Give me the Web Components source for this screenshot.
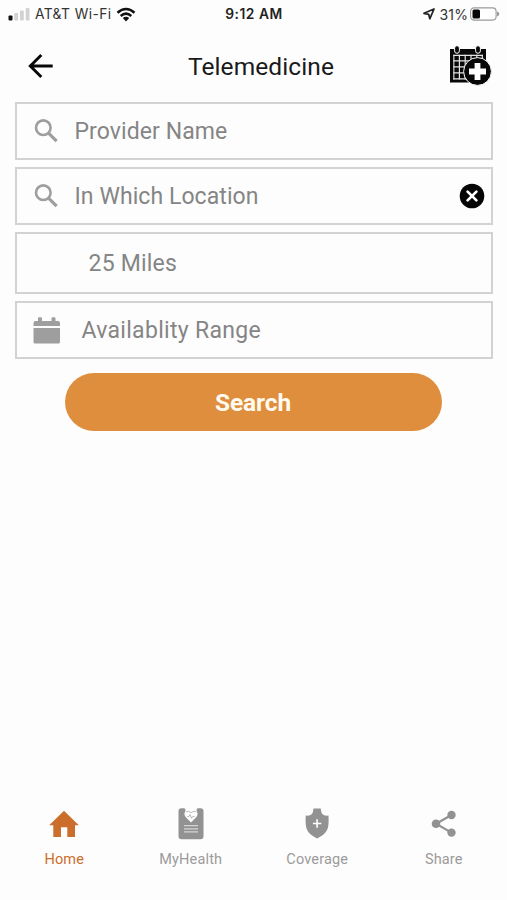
<!DOCTYPE html>
<html lang="en">
<head>
<meta charset="utf-8">
<title>Telemedicine</title>
<style>
  body {
    margin: 0;
    background: #fdfdfd;
    font-family: Roboto, "Liberation Sans", sans-serif;
  }
</style>
</head>
<body>
<telemed-app></telemed-app>
<script>
const icons = {
  back: `<svg width="26" height="26" viewBox="0 0 26 26" fill="none" stroke="#080808" stroke-width="2.9"><path d="M24.7 13H2.5M13.3 2L2.3 13L13.3 24"/></svg>`,
  schedule: `<svg width="44" height="42" viewBox="0 0 44 42">
    <path fill="#080808" d="M1 4h36v33.500H1z"/>
    <g fill="#e4e4e4">
      <path d="M4.3 9.8h29.6v1.1H4.3zM4.3 15.200h29.6v1.200H4.3zM4.3 21.200h29.6v1.200H4.3zM4.3 27.200h29.6v1.200H4.3zM4.3 33.300h29.6v1.100H4.3z"/>
      <path d="M4.3 9.8h1.100v24.600H4.3zM9.8 9.8h1.200v24.600H9.8zM15.6 9.8h1.200v24.600h-1.200zM21.4 9.8h1.200v24.600h-1.200zM27.2 9.8h1.200v24.600h-1.200zM32.7 9.8h1.200v24.600h-1.200z"/>
    </g>
    <g fill="#080808" stroke="#fdfdfd" stroke-width="1">
      <rect x="5.6" y=".7" width="4.8" height="7.6" rx="2.4"/>
      <rect x="26.6" y=".7" width="4.8" height="7.6" rx="2.4"/>
      <circle cx="28.5" cy="26.5" r="13.9"/>
    </g>
    <path fill="#fdfdfd" d="M25.6 18h5.8v5.600H37v5.800h-5.600V35h-5.800v-5.600H20v-5.800h5.600z"/>
  </svg>`,
  search: `<svg width="24" height="24" viewBox="0 0 24 24" fill="none" stroke="#9e9e9e"><circle cx="9.3" cy="8.7" r="7.3" stroke-width="2.6"/><path stroke-width="3.2" d="M14.3 13.9L22.6 22.2"/></svg>`,
  calendar: `<svg width="28" height="27" viewBox="0 0 28 27" fill="#9e9e9e"><path d="M.5 9V6q0-2 2-2H5V1.500Q5 .3 6.200.3h1.600Q9 .3 9 1.500V4h9.500V1.500q0-1.200 1.200-1.200h1.600q1.200 0 1.200 1.200V4H25q2 0 2 2v3zM.5 11H27v14q0 1.500-1.500 1.500H2Q.5 26.500.5 25z"/></svg>`,
  clear: `<svg width="26" height="26" viewBox="0 0 26 26"><circle cx="13" cy="13" r="12.3" fill="#050505"/><path stroke="#fff" stroke-width="2.7" stroke-linecap="round" d="M8.6 8.6l8.8 8.8M17.4 8.6l-8.8 8.8"/></svg>`,
  home: `<svg width="30" height="32" viewBox="0 0 30 32" fill="#cb6e2b"><path d="M15 2.7L29.8 17.3H26V29H18.3V19.2H12V29H4.3V17.3H.2z"/></svg>`,
  health: `<svg width="30" height="32" viewBox="0 0 30 32"><path fill="#929292" d="M5.5.3H8q1.500 0 1.500 2L9 4q-1.500 2.500.8 5.200l5.200 5.300 5.200-5.300Q22.500 6.500 21 4l-.5-1.700q0-2 1.500-2h2.500q3 0 3 3v24.900q0 3-3 3h-19q-3 0-3-3V3.300q0-3 3-3z"/>
    <path fill="none" stroke="#a8a8a8" stroke-width=".8" d="M10 3.7q2.500-1.200 5 1 2.500-2.200 5-1M11.500 8.500h1.500l1-2 1.500 3.800 1.200-1.800h1.800"/>
    <path stroke="#d5d5d5" stroke-width="1.3" d="M8 17.7h14M8 20.8h14M8 23.8h14"/></svg>`,
  coverage: `<svg width="30" height="32" viewBox="0 0 30 32"><path fill="#929292" d="M11.5.6h7.2l.8 4.200q1.800 3.400 7 2.800.5 9.500-1 13.500-2.200 5.800-10.400 9.400Q6.900 26.900 4.700 21.100q-1.500-4-1-13.500 5.200.6 7-2.800z"/><path stroke="#fff" stroke-width="1.6" d="M15.1 11.3v8.4M10.9 15.5h8.4"/></svg>`,
  share: `<svg width="30" height="32" viewBox="0 0 30 32" fill="#929292"><path fill="none" stroke="#929292" stroke-width="2.2" d="M22.5 7L7 15.8L22.5 24.6"/><circle cx="7" cy="15.8" r="4.3"/><circle cx="22.5" cy="7" r="4.2"/><circle cx="22.5" cy="24.6" r="4.2"/></svg>`,
};

class StatusBar extends HTMLElement {
  constructor() {
    super();
    this.attachShadow({ mode: 'open' });
  }

  connectedCallback() {
    this.shadowRoot.innerHTML = `
      <style>
        :host {
          display: grid;
          grid-template-columns: 1fr auto 1fr;
          align-items: center;
          height: 27px;
          padding: 0 7px 0 8px;
          box-sizing: border-box;
          font: 13.8px/27px Inter, sans-serif;
          color: #333;
        }
        div { display: flex; align-items: center; }
        .carrier { margin: 0 5px; padding-top: 1px; letter-spacing: .4px; }
        .time { padding-top: 1px; font-weight: 600; letter-spacing: .5px; color: #222; }
        .right { justify-content: flex-end; }
        .percent { margin: 0 2px 0 5px; font-size: 14px; letter-spacing: .1px; }
        svg { display: block; }
      </style>
      <div>
        <svg width="22" height="14" viewBox="0 0 22 14"><rect x=".5" y="8.5" width="4" height="5" rx="1" fill="#111"/><g fill="#d2d2d2"><rect x="6.3" y="6" width="3.8" height="7.5" rx="1"/><rect x="12" y="3.5" width="3.8" height="10" rx="1"/><rect x="17.7" y="1" width="3.8" height="12.5" rx="1"/></g></svg>
        <span class="carrier">AT&amp;T Wi-Fi</span>
        <svg width="20" height="15" viewBox="0 0 20 15" fill="none" stroke="#111" stroke-width="2.5"><path d="M1.5 5.7Q10-1.8 18.5 5.7"/><path d="M4.7 9Q10 4.3 15.3 9"/><path fill="#111" stroke="none" d="M6.8 11q3.2-2.7 6.4 0L10 14.5z"/></svg>
      </div>
      <div class="time">9:12 AM</div>
      <div class="right">
        <svg width="12" height="12" viewBox="0 0 12 12" fill="none" stroke="#222" stroke-width="1.7" stroke-linejoin="round"><path d="M1 5.3L11 1L6.8 10.8L5.7 6.3z"/></svg>
        <span class="percent">31%</span>
        <svg width="30" height="14" viewBox="0 0 30 14"><rect x=".6" y=".9" width="25.5" height="12.2" rx="3.5" fill="#fff" stroke="#9a9a9a" stroke-width="1.1"/><rect x="2.5" y="2.5" width="7.5" height="9" rx="1.5" fill="#080808"/><path fill="#999" d="M27 4.500q2.300.8 2.300 2.500T27 9.500z"/></svg>
      </div>
    `;
  }
}

class PageHeader extends HTMLElement {
  constructor() {
    super();
    this.attachShadow({ mode: 'open' });
  }

  connectedCallback() {
    this.shadowRoot.innerHTML = `
      <style>
        :host {
          display: grid;
          grid-template-columns: 1fr auto 1fr;
          align-items: center;
          height: 75px;
          padding: 3px 14px 0 28px;
          box-sizing: border-box;
        }
        h1 {
          margin: 1px 0 0 1px;
          font-size: 24.5px;
          font-weight: 400;
          line-height: 30px;
          letter-spacing: .1px;
          color: #1a1a1a;
        }
        .action { justify-self: end; }
        svg { display: block; }
      </style>
      <div class="back">${icons.back}</div>
      <h1><slot></slot></h1>
      <div class="action">${icons.schedule}</div>
    `;
  }
}

class SearchField extends HTMLElement {
  constructor() {
    super();
    this.attachShadow({ mode: 'open' });
  }

  connectedCallback() {
    const icon = this.getAttribute('icon');
    this.shadowRoot.innerHTML = `
      <style>
        :host {
          display: flex;
          align-items: center;
          height: 58px;
          padding: 0 6px 0 17px;
          box-sizing: border-box;
          border: 2px solid #d2d2d2;
          font-size: 23px;
          line-height: 30px;
          letter-spacing: var(--label-spacing, .08px);
          color: #858585;
        }
        :host([tall]) { height: 62px; }
        .icon { width: var(--icon-width, 40.5px); }
        .label { flex: 1; padding-top: 2px; white-space: nowrap; }
        svg { display: block; }
      </style>
      <div class="icon">${icon ? icons[icon] : ''}</div>
      <div class="label"><slot></slot></div>
      ${this.hasAttribute('clearable') ? icons.clear : ''}
    `;
  }
}

class SearchButton extends HTMLElement {
  constructor() {
    super();
    this.attachShadow({ mode: 'open' });
  }

  connectedCallback() {
    this.shadowRoot.innerHTML = `
      <style>
        :host { display: block; }
        button {
          display: block;
          width: 100%;
          height: 58px;
          padding: 2px 1px 0 0;
          border: 0;
          border-radius: 29px;
          background: #de8e3c;
          color: #fffaf0;
          font: 700 24.5px/56px Roboto, sans-serif;
          letter-spacing: -.1px;
        }
      </style>
      <button><slot></slot></button>
    `;
  }
}

class TabItem extends HTMLElement {
  constructor() {
    super();
    this.attachShadow({ mode: 'open' });
  }

  connectedCallback() {
    this.shadowRoot.innerHTML = `
      <style>
        :host {
          flex: 1;
          display: flex;
          flex-direction: column;
          align-items: center;
          gap: 10px;
          color: #9b9b9b;
          font-size: 14.5px;
          line-height: 20px;
          letter-spacing: .15px;
        }
        :host([active]) { color: #cb6e2b; }
        svg { display: block; }
      </style>
      ${icons[this.getAttribute('icon')]}
      <span><slot></slot></span>
    `;
  }
}

class TelemedApp extends HTMLElement {
  constructor() {
    super();
    this.attachShadow({ mode: 'open' });
  }

  connectedCallback() {
    this.shadowRoot.innerHTML = `
      <style>
        :host {
          display: flex;
          flex-direction: column;
          height: 900px;
          overflow: hidden;
        }
        main { flex: 1; padding: 0 14px 0 15px; }
        form { display: flex; flex-direction: column; gap: 7px; }
        search-button { margin: 7px 51px 0 50px; }
        nav { display: flex; height: 92px; padding-left: 1px; }
        .miles { --icon-width: 54.5px; --label-spacing: .2px; }
        .range { --icon-width: 48.5px; --label-spacing: .3px; padding-left: 16px; }
      </style>
      <status-bar></status-bar>
      <page-header>Telemedicine</page-header>
      <main>
        <form>
          <search-field icon="search">Provider Name</search-field>
          <search-field icon="search" clearable>In Which Location</search-field>
          <search-field class="miles" tall>25 Miles</search-field>
          <search-field class="range" icon="calendar">Availablity Range</search-field>
          <search-button>Search</search-button>
        </form>
      </main>
      <nav>
        <tab-item icon="home" active>Home</tab-item>
        <tab-item icon="health">MyHealth</tab-item>
        <tab-item icon="coverage">Coverage</tab-item>
        <tab-item icon="share">Share</tab-item>
      </nav>
    `;
  }
}

customElements.define('status-bar', StatusBar);
customElements.define('page-header', PageHeader);
customElements.define('search-field', SearchField);
customElements.define('search-button', SearchButton);
customElements.define('tab-item', TabItem);
customElements.define('telemed-app', TelemedApp);
</script>
</body>
</html>
